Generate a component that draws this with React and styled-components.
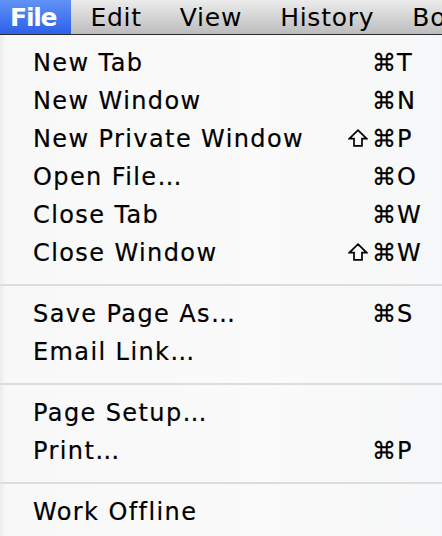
import { createGlobalStyle } from "styled-components";
import styled from "styled-components";

const GlobalStyle = createGlobalStyle`
  html, body {
    margin: 0;
    padding: 0;
    background: #f6f7f8;
  }
  body {
    width: 442px;
    height: 536px;
    overflow: hidden;
    font-family: "DejaVu Sans", "Liberation Sans", sans-serif;
  }
`;

const topMenus = ["Edit", "View", "History", "Bo"];

const groups = [
  [
    { label: "New Tab", key: "T" },
    { label: "New Window", key: "N" },
    { label: "New Private Window", shift: true, key: "P" },
    { label: "Open File…", key: "O" },
    { label: "Close Tab", key: "W" },
    { label: "Close Window", shift: true, key: "W" },
  ],
  [
    { label: "Save Page As…", key: "S" },
    { label: "Email Link…" },
  ],
  [
    { label: "Page Setup…" },
    { label: "Print…", key: "P" },
  ],
  [{ label: "Work Offline" }],
];

function ShiftIcon() {
  return (
    <ShiftSvg viewBox="0 0 20 18" width="20" height="18">
      <path
        d="M10 1.2 L18.6 9.6 H14 V16.8 H6 V9.6 H1.4 Z"
        fill="none"
        stroke="#000"
        strokeWidth="1.7"
      />
    </ShiftSvg>
  );
}

function App() {
  return (
    <Screen>
      <GlobalStyle />
      <MenuBar>
        <BarItem $active>File</BarItem>
        {topMenus.map(m => (
          <BarItem key={m}>{m}</BarItem>
        ))}
      </MenuBar>
      <Dropdown>
        {groups.map((group, i) => (
          <Group key={i}>
            {i > 0 && <Separator />}
            {group.map(item => (
              <Row key={item.label}>
                <Label>{item.label}</Label>
                <Mods>
                  {item.shift && <ShiftIcon />}
                  {item.key && "⌘"}
                </Mods>
                <Key>{item.key}</Key>
              </Row>
            ))}
          </Group>
        ))}
      </Dropdown>
    </Screen>
  );
}

const Screen = styled.div`
  width: 442px;
  height: 536px;
  display: flex;
  flex-direction: column;
  overflow: hidden;
`;

const MenuBar = styled.div`
  height: 34px;
  display: flex;
  align-items: stretch;
  background: linear-gradient(#ececec, #d2d2d2 55%, #bcbcbc);
  border-bottom: 1px solid #2a2a2a;
  flex-shrink: 0;
`;

const BarItem = styled.div`
  display: flex;
  align-items: center;
  padding-left: ${p => (p.$active ? "10px" : "19px")};
  padding-right: ${p => (p.$active ? "15px" : "19px")};
  font-size: 25px;
  letter-spacing: ${p => (p.$active ? "-1.2px" : "0.75px")};
  font-weight: ${p => (p.$active ? 700 : 400)};
  color: ${p => (p.$active ? "#fff" : "#000")};
  background: ${p => (p.$active ? "linear-gradient(#6092f6, #2c61ea)" : "transparent")};
  white-space: nowrap;
`;

const Dropdown = styled.div`
  flex: 1;
  padding-top: 9px;
  background: linear-gradient(90deg, #ececec 0, #f8f8f8 6px, #fafafa 60%, #f6f7f8);
`;

const Group = styled.div`
  display: flex;
  flex-direction: column;
`;

const Separator = styled.div`
  height: 2px;
  margin: 12px 0 9px;
  background: #dcdcdc;
`;

const Row = styled.div`
  display: grid;
  grid-template-columns: 1fr auto 46px;
  align-items: center;
  height: 38px;
  line-height: 38px;
  padding-left: 33px;
  font-size: 24px;
  letter-spacing: 1.4px;
  color: #000;
  -webkit-text-stroke: 0.2px #000;
`;

const Label = styled.span`
  white-space: nowrap;
`;

const Mods = styled.span`
  display: flex;
  align-items: center;
  justify-content: flex-end;
  gap: 4px;
  letter-spacing: 0;
  white-space: nowrap;
`;

const ShiftSvg = styled.svg`
  display: block;
  margin-top: -2px;
`;

const Key = styled.span`
  padding-left: 1px;
  letter-spacing: 0;
`;

export default App;
